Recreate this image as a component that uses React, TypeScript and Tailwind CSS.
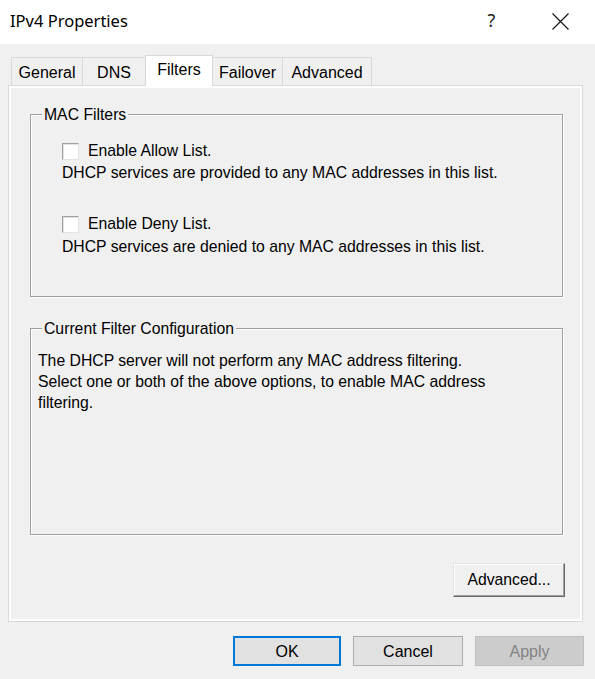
import React from 'react';

// ─── Tabs ────────────────────────────────────────────────────────────────────
const TABS = [
  { label: 'General', width: 'w-[72px]' },
  { label: 'DNS', width: 'w-[64px]' },
  { label: 'Filters', width: 'w-[68px]', active: true },
  { label: 'Failover', width: 'w-[71px]' },
  { label: 'Advanced', width: 'w-[90px]' },
];

const CheckBox: React.FC = () => (
  <span className="block h-[17px] w-[17px] shrink-0 border border-t-[#a0a0a0] border-l-[#a0a0a0] border-r-[#e3e3e3] border-b-[#e3e3e3] bg-white shadow-[inset_1px_1px_0_#e3e3e3]" />
);

const GroupBox: React.FC<{ title: string; className: string; children: React.ReactNode }> = ({ title, className, children }) => (
  <div className={`relative border border-[#a0a0a0] shadow-[1px_1px_0_#fff,inset_1px_1px_0_#fff] ${className}`}>
    <span className="absolute -top-[9px] left-[11px] bg-[#f0f0f0] px-[2px] leading-[18px]">{title}</span>
    {children}
  </div>
);

const App: React.FC = () => {
  return (
    <div className="flex h-[679px] w-[595px] flex-col overflow-hidden bg-[#f0f0f0] font-['Liberation_Sans',Arial,sans-serif] text-[15.75px] text-black">
      {/* Title bar */}
      <div className="flex h-[44px] shrink-0 items-center bg-white">
        <span className="flex-1 pl-[10px] pb-[2px] font-['Segoe_UI','Noto_Sans',sans-serif] text-[16.5px]">IPv4 Properties</span>
        <span className="flex h-full w-[69px] items-center justify-center pb-[4px] font-['Segoe_UI','Noto_Sans',sans-serif] text-[18px] text-[#222]">?</span>
        <span className="flex h-full w-[69px] items-center justify-center pb-[2px]">
          <svg width="17" height="17" viewBox="0 0 17 17" fill="none" stroke="#111" strokeWidth="1.1">
            <path d="M0.5 0.5 L16.5 16.5 M16.5 0.5 L0.5 16.5" />
          </svg>
        </span>
      </div>

      {/* Body */}
      <div className="flex flex-col pl-[8px] pr-[12px] pt-[11px]">
        {/* Tab strip */}
        <div className="flex h-[30px] items-end pl-[3px] text-[16px]">
          {TABS.map((t, i) =>
            t.active ? (
              <div
                key={t.label}
                className={`relative z-10 -mb-px flex h-[31px] ${t.width} -ml-px items-center justify-center border border-b-0 border-[#d9d9d9] bg-white pb-[3px]`}
              >
                {t.label}
              </div>
            ) : (
              <div
                key={t.label}
                className={`flex h-[28px] ${t.width} ${i > 0 ? '-ml-px' : ''} items-center justify-center border border-b-0 border-[#d9d9d9] bg-[#f0f0f0] pt-[2px]`}
              >
                {t.label}
              </div>
            )
          )}
        </div>

        {/* Tab page */}
        <div className="flex h-[537px] flex-col border border-[#d9d9d9] pl-[21px] pr-[19px] pt-[28px] shadow-[inset_0_0_0_2px_#fff]">
          <GroupBox title="MAC Filters" className="h-[183px] pl-[31px] pt-[26px]">
            <div className="flex h-[20px] items-center gap-[9px]">
              <CheckBox />
              <span className="leading-[20px]">Enable Allow List.</span>
            </div>
            <div className="mt-[2px] leading-[20px]">DHCP services are provided to any MAC addresses in this list.</div>
            <div className="mt-[31px] flex h-[20px] items-center gap-[9px]">
              <CheckBox />
              <span className="leading-[20px]">Enable Deny List.</span>
            </div>
            <div className="mt-[3px] leading-[20px]">DHCP services are denied to any MAC addresses in this list.</div>
          </GroupBox>

          <GroupBox title="Current Filter Configuration" className="mt-[31px] h-[207px] pl-[7px] pt-[21px]">
            <p className="leading-[21px]">
              The DHCP server will not perform any MAC address filtering.
              <br />
              Select one or both of the above options, to enable MAC address
              <br />
              filtering.
            </p>
          </GroupBox>

          <div className="-mr-[2px] mt-[28px] flex justify-end">
            <button className="h-[34px] w-[112px] border border-t-[#e3e3e3] border-l-[#e3e3e3] border-r-[#696969] border-b-[#696969] bg-[#f0f0f0] pb-[1px] shadow-[inset_-1px_-1px_0_#a0a0a0,inset_1px_1px_0_#fff]">
              Advanced...
            </button>
          </div>
        </div>

        {/* Dialog buttons */}
        <div className="-mr-[1px] mt-[14px] flex justify-end gap-[12px] text-[16px]">
          <button className="h-[30px] w-[108px] border-2 border-[#0078d7] bg-[#e1e1e1] pt-[1px]">OK</button>
          <button className="h-[30px] w-[110px] border border-[#adadad] bg-[#e1e1e1] pt-[1px]">Cancel</button>
          <button className="h-[30px] w-[109px] border border-[#bfbfbf] bg-[#cccccc] pt-[1px] text-[#838383]">Apply</button>
        </div>
      </div>
    </div>
  );
};

export default App;
